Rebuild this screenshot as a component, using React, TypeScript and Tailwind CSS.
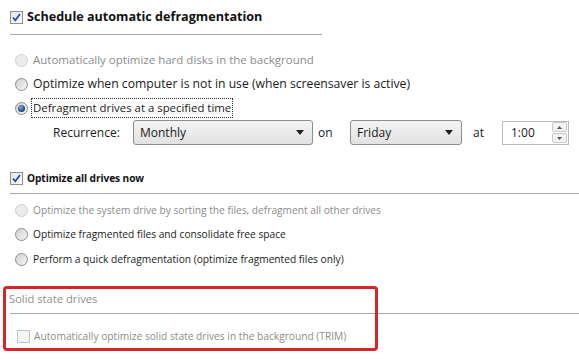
import React from "react";

function CheckBox({ checked, disabled }: { checked?: boolean; disabled?: boolean }) {
  return (
    <div
      className={
        "w-[13px] h-[13px] border flex items-center justify-center shrink-0 " +
        (disabled ? "border-[#c4c4c4] bg-[#f4f4f4]" : "border-[#8f8f8f] bg-gradient-to-br from-[#e6e6e6] to-[#fbfbfb]")
      }
    >
      {checked && (
        <svg width="11" height="11" viewBox="0 0 11 11">
          <path d="M2 5.5 L4.3 8.3 L9 2" stroke="#2b4aa8" strokeWidth="1.8" fill="none" />
        </svg>
      )}
    </div>
  );
}

function Radio({ checked, disabled }: { checked?: boolean; disabled?: boolean }) {
  return (
    <div
      className={
        "w-[13px] h-[13px] rounded-full border flex items-center justify-center shrink-0 " +
        (disabled ? "border-[#cfcfcf] bg-[#ececec]" : "border-[#8e8e8e] bg-gradient-to-br from-[#d0d0d0] to-[#f6f6f6]")
      }
    >
      {checked && (
        <div className="w-[7px] h-[7px] rounded-full bg-[radial-gradient(circle_at_40%_35%,#7fb2e0,#1d4f86_60%,#0e2f5c)]" />
      )}
    </div>
  );
}

function RadioRow({
  label,
  checked,
  disabled,
  focus,
  h = "h-[24px]",
  size,
}: {
  label: string;
  checked?: boolean;
  disabled?: boolean;
  focus?: boolean;
  h?: string;
  size: string;
}) {
  return (
    <div className={"flex items-center pl-[15px] gap-[5px] " + h}>
      <Radio checked={checked} disabled={disabled} />
      <span
        className={
          size +
          (disabled ? " text-[#8c8c8c] " : " text-[#1a1a1a] ") +
          (focus ? "outline outline-1 outline-dotted outline-[#333] px-[1px] py-[3px] -ml-[1px]" : "")
        }
      >
        {label}
      </span>
    </div>
  );
}

function Dropdown({ value, w }: { value: string; w: string }) {
  return (
    <div
      className={
        "h-[25px] rounded-[3px] border border-[#8d8d8d] bg-gradient-to-b from-[#f4f4f4] to-[#e2e2e2] flex items-center justify-between pl-[6px] pr-[8px] " +
        w
      }
    >
      <span className="text-[#1a1a1a]">{value}</span>
      <svg width="8" height="5" viewBox="0 0 8 5">
        <path d="M0 0 H8 L4 5 Z" fill="#222" />
      </svg>
    </div>
  );
}

export default function App() {
  return (
    <div className="w-[579px] h-[359px] bg-white overflow-hidden font-['Open_Sans',sans-serif] text-[12px] leading-none">
      {/* Schedule */}
      <div className="mt-[5px] h-[24px] pl-[10px] flex items-center gap-[4px]">
        <CheckBox checked />
        <span className="font-bold text-[12.6px] text-[#111]">Schedule automatic defragmentation</span>
      </div>
      <div className="mt-[5px] ml-[10px] w-[312px] h-px bg-[#a9a9a9]" />
      <div className="mt-[13px]">
        <RadioRow label="Automatically optimize hard disks in the background" disabled size="text-[11.5px]" />
        <RadioRow label="Optimize when computer is not in use (when screensaver is active)" size="text-[12.2px]" />
        <RadioRow label="Defragment drives at a specified time" checked focus size="text-[11.4px]" />
      </div>
      <div className="h-[25px] flex items-center">
        <span className="ml-[53px] w-[80px] text-[#1a1a1a]">Recurrence:</span>
        <Dropdown value="Monthly" w="w-[180px]" />
        <span className="ml-[5px] w-[32px] text-[#1a1a1a]">on</span>
        <Dropdown value="Friday" w="w-[112px]" />
        <span className="ml-[11px] w-[29px] text-[#1a1a1a]">at</span>
        <div className="w-[67px] h-[24px] border border-[#b9b9b9] bg-white flex items-center justify-between pl-[8px] pr-[1px]">
          <span className="text-[#1a1a1a]">1:00</span>
          <div className="flex flex-col gap-px">
            <div className="w-[15px] h-[10px] border border-[#c9c9c9] bg-[#f3f3f3] rounded-[2px] flex items-center justify-center">
              <svg width="5" height="3" viewBox="0 0 5 3"><path d="M0 3 H5 L2.5 0 Z" fill="#555" /></svg>
            </div>
            <div className="w-[15px] h-[10px] border border-[#c9c9c9] bg-[#f3f3f3] rounded-[2px] flex items-center justify-center">
              <svg width="5" height="3" viewBox="0 0 5 3"><path d="M0 0 H5 L2.5 3 Z" fill="#555" /></svg>
            </div>
          </div>
        </div>
      </div>

      {/* Optimize now */}
      <div className="mt-[21px] h-[24px] pl-[10px] flex items-center gap-[4px]">
        <CheckBox checked />
        <span className="font-bold text-[10.2px] tracking-[-0.1px] text-[#111]">Optimize all drives now</span>
      </div>
      <div className="mt-[3px] ml-[10px] h-px bg-[#a9a9a9]" />
      <div className="mt-[4px]">
        <RadioRow label="Optimize the system drive by sorting the files, defragment all other drives" disabled size="text-[10.2px]" />
        <RadioRow label="Optimize fragmented files and consolidate free space" h="h-[25px]" size="text-[10.2px]" />
        <RadioRow label="Perform a quick defragmentation (optimize fragmented files only)" size="text-[10.2px]" />
      </div>

      {/* SSD */}
      <div className="relative mt-[15px]">
        <div className="absolute left-[3px] top-0 w-[375px] h-[65px] border-[3px] border-[#d42828] rounded-[4px]" />
        <div className="h-[23px] pt-[3px] pl-[9px] flex items-center">
          <span className="text-[11.2px] text-[#8f8f8f]">Solid state drives</span>
        </div>
        <div className="mt-[4px] ml-[10px] h-px bg-[#a9a9a9]" />
        <div className="mt-[15px] pl-[17px] flex items-center gap-[4px] h-[14px]">
          <CheckBox disabled />
          <span className="text-[10.2px] text-[#8c8c8c]">Automatically optimize solid state drives in the background (TRIM)</span>
        </div>
      </div>
    </div>
  );
}
